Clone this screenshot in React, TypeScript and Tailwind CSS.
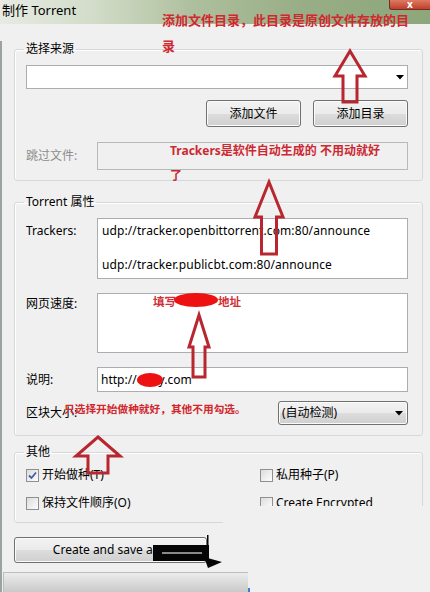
import React from "react";

const btn =
  "rounded-[3px] border border-[#707070] bg-[linear-gradient(180deg,#f2f2f2_0%,#ebebeb_50%,#dddddd_50%,#cfcfcf_100%)] shadow-[inset_0_0_0_1px_#fbfbfb] flex items-center justify-center text-[12px] text-black";

const field = "border border-[#abadb3] bg-white";

const arrow = (tx: number, ty: number, hw: number, hy: number, sw: number, by: number) =>
  [
    [tx, ty],
    [tx + hw, hy],
    [tx + sw, hy],
    [tx + sw, by],
    [tx - sw, by],
    [tx - sw, hy],
    [tx - hw, hy],
  ]
    .map((p) => p.join(","))
    .join(" ");

function Check({ checked, label }: { checked?: boolean; label: string }) {
  return (
    <div className="flex items-center gap-[3px] h-[16px]">
      <div className="w-[13px] h-[13px] border border-[#8f8f8f] bg-[linear-gradient(135deg,#dcdcdc,#fdfdfd)] flex items-center justify-center">
        {checked && (
          <svg width="9" height="9" viewBox="0 0 9 9">
            <path d="M1 4.5 L3.5 7 L8 1.5" fill="none" stroke="#4060a0" strokeWidth="1.8" />
          </svg>
        )}
      </div>
      <span className="text-[12px] leading-[16px] whitespace-nowrap">{label}</span>
    </div>
  );
}

function Group({ title, className, children }: { title: string; className: string; children: React.ReactNode }) {
  return (
    <fieldset className={`ml-[12px] mr-[7px] border border-[#d5d9dc] rounded-[3px] shadow-[inset_1px_1px_0_#ffffff] ${className}`}>
      <legend className="ml-[9px] px-[2px] text-[12px] leading-[16px]">{title}</legend>
      {children}
    </fieldset>
  );
}

export default function App() {
  return (
    <div className="relative w-[430px] h-[592px] overflow-hidden bg-[#f0f0f0] text-black font-['Noto_Sans','Noto_Sans_CJK_SC',sans-serif]">
      {/* title bar */}
      <div className="h-[24px] flex justify-between bg-[linear-gradient(90deg,#e7ebe3_0%,#d2dcc8_22%,#aebf9d_45%,#98ae86_70%,#8da67a_100%)]">
        <span className="pl-[2px] pt-[2px] text-[13px] leading-[17px]">制作 Torrent</span>
        <div className="w-[41px] h-[10px] rounded-bl-[3px] bg-[linear-gradient(180deg,#dd7a63,#bf3f2c)] border-l border-b border-[#7a2a20] flex items-start justify-center">
          <span className="text-white text-[10px] leading-[9px] font-bold">x</span>
        </div>
      </div>

      {/* client area */}
      <div className="h-[568px] border-l-2 border-[#9ba39f]">
        <Group title="选择来源" className="mt-[17px]">
          <div className="pl-[11px] pr-[14px] pt-[8px] pb-[10px]">
            <div className={`${field} h-[24px] flex items-center justify-end pr-[3px]`}>
              <svg width="8" height="5" viewBox="0 0 8 5">
                <path d="M0 0 H8 L4 4.5 Z" fill="#000" />
              </svg>
            </div>
            <div className="mt-[11px] flex justify-end gap-[12px]">
              <div className={`${btn} w-[95px] h-[27px]`}>添加文件</div>
              <div className={`${btn} w-[95px] h-[27px]`}>添加目录</div>
            </div>
            <div className="mt-[15px] flex items-center">
              <span className="w-[71px] text-[12px] text-[#8d8d8d]">跳过文件:</span>
              <div className="flex-1 h-[28px] border border-[#b5b9bd] bg-[#f0f0f0]" />
            </div>
          </div>
        </Group>

        <Group title="Torrent 属性" className="mt-[13px]">
          <div className="pl-[11px] pr-[14px] pt-[8px] pb-[10px] text-[12px]">
            <div className="flex">
              <span className="w-[71px] pt-[5px] leading-[16px]">Trackers:</span>
              <div className={`${field} flex-1 h-[61px] pl-[4px] pt-[3px] leading-[17px] tracking-[0.1px]`}>
                <div>udp://tracker.openbittorrent.com:80/announce</div>
                <div>&nbsp;</div>
                <div>udp://tracker.publicbt.com:80/announce</div>
              </div>
            </div>
            <div className="mt-[14px] flex">
              <span className="w-[71px] pt-[3px] leading-[16px]">网页速度:</span>
              <div className={`${field} flex-1 h-[60px]`} />
            </div>
            <div className="mt-[14px] flex items-center">
              <span className="w-[71px]">说明:</span>
              <div className={`${field} flex-1 h-[25px] pl-[3px] flex items-center whitespace-pre`}>
                http://<span className="inline-block w-[22px]" />y.com
              </div>
            </div>
            <div className="mt-[9px] flex items-center justify-between">
              <span>区块大小:</span>
              <div className={`${btn} w-[130px] h-[24px] !justify-between pl-[3px] pr-[4px]`}>
                <span>(自动检测)</span>
                <svg width="8" height="5" viewBox="0 0 8 5">
                  <path d="M0 0 H8 L4 4.5 Z" fill="#000" />
                </svg>
              </div>
            </div>
          </div>
        </Group>

        <Group title="其他" className="mt-[8px]">
          <div className="pl-[11px] pt-[7px] pb-[11px] grid grid-cols-[234px_1fr] gap-y-[12px]">
            <Check checked label="开始做种(T)" />
            <Check label="私用种子(P)" />
            <Check label="保持文件顺序(O)" />
            <Check label="Create Encrypted" />
          </div>
        </Group>

        <div className={`${btn} ml-[12px] mt-[14px] w-[193px] h-[26px] text-[12.5px]`}>Create and save as...</div>

        <div className="ml-[1px] mt-[9px] w-[245px] h-[20px] border-t border-l border-[#bdbdbd] bg-[linear-gradient(180deg,#ececec,#c9c9c9)]" />
      </div>

      {/* cropped-off corner of the dialog */}
      <div className="absolute left-[223px] top-[506px] w-[207px] h-[64px] bg-[#f0f0f0]" />

      {/* annotations */}
      <div className="absolute left-[162px] top-[7px] text-[13px] leading-[26px] font-bold text-[#d0282e] whitespace-nowrap">
        添加文件目录，此目录是原创文件存放的目
        <br />录
      </div>
      <div className="absolute left-[170px] top-[138px] text-[12px] leading-[25px] font-bold text-[#cc2a33] whitespace-nowrap">
        Trackers是软件自动生成的 不用动就好
        <br />了
      </div>
      <div className="absolute left-[153px] top-[294px] text-[11.5px] leading-[16px] font-bold text-[#cf3038] whitespace-nowrap">
        填写<span className="inline-block w-[42px]" />地址
      </div>
      <div className="absolute left-[64px] top-[401px] text-[10.7px] leading-[16px] font-bold text-[#d0282e] whitespace-nowrap">
        只选择开始做种就好，其他不用勾选。
      </div>

      <svg className="absolute left-0 top-0 pointer-events-none" width="430" height="592" viewBox="0 0 430 592">
        <g fill="none" stroke="#b8262f" strokeWidth="3" strokeLinejoin="miter">
          <polygon points={arrow(350, 51, 15, 76, 7, 102)} />
          <polygon points={arrow(269, 182, 14, 217, 7.5, 254)} />
          <polygon points={arrow(199, 315, 10, 347, 6, 377)} />
          <polygon points={arrow(98, 437, 22, 456, 10, 473)} />
        </g>
        <ellipse cx="196" cy="300" rx="22" ry="7" fill="#ee1111" />
        <ellipse cx="150" cy="380" rx="13" ry="7" fill="#ee1111" />
        <rect x="153" y="545" width="56" height="16" fill="#050505" />
        <rect x="162" y="552" width="40" height="2" fill="#8a8a8a" />
        <polygon points="204,557 222,562 208,568" fill="#050505" />
        <rect x="207" y="535" width="1.5" height="12" fill="#050505" />
        <rect x="248" y="588" width="2" height="4" fill="#3c7fd0" />
      </svg>
    </div>
  );
}
